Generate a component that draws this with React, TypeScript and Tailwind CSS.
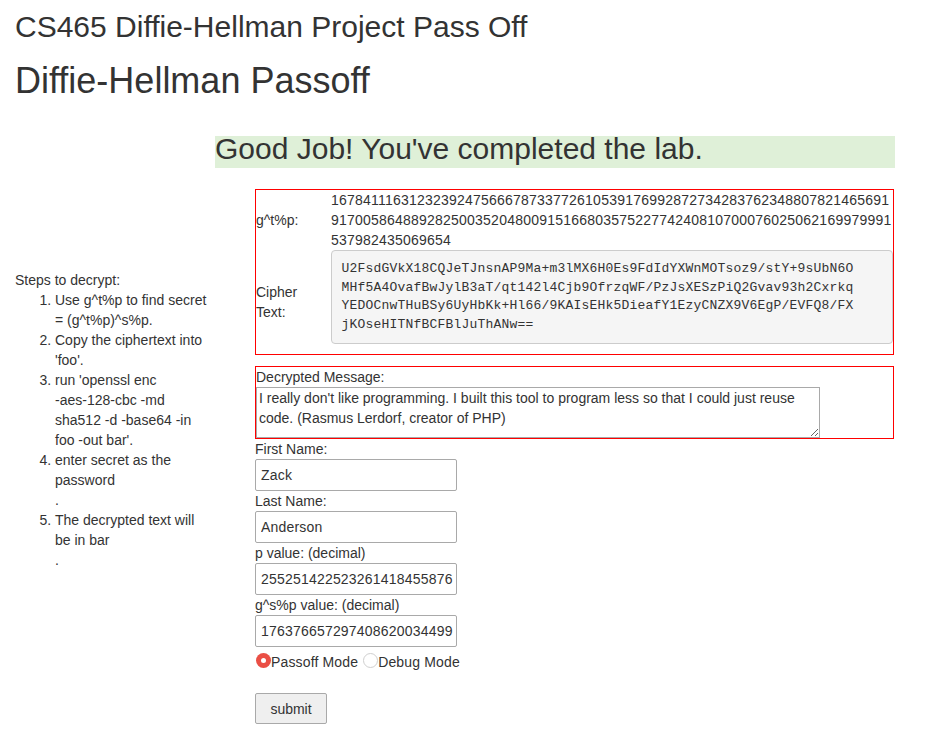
export default function App() {
  const cipher = `U2FsdGVkX18CQJeTJnsnAP9Ma+m3lMX6H0Es9FdIdYXWnMOTsoz9/stY+9sUbN6O
MHf5A4OvafBwJylB3aT/qt142l4Cjb9OfrzqWF/PzJsXESzPiQ2Gvav93h2Cxrkq
YEDOCnwTHuBSy6UyHbKk+Hl66/9KAIsEHk5DieafY1EzyCNZX9V6EgP/EVFQ8/FX
jKOseHITNfBCFBlJuThANw==`;

  const gtp =
    "1678411163123239247566678733772610539176992872734283762348807821465691" +
    "9170058648892825003520480091516680357522774240810700076025062169979991" +
    "537982435069654";

  const inputCls =
    "block h-[32px] w-[202px] rounded-[2px] border border-[#a9a9a9] pl-[5px] pr-[3px] tracking-[0.2px]";

  return (
    <div className="min-h-screen bg-white px-[15px] pt-[10px] font-['Liberation_Sans',Arial,sans-serif] text-[14px] leading-[20px] text-[#333]">
      <h2 className="text-[30px] leading-[33px]">CS465 Diffie-Hellman Project Pass Off</h2>
      <h1 className="mt-[18px] text-[36px] leading-[40px]">Diffie-Hellman Passoff</h1>

      <div className="ml-[200px] mt-[35px] w-[680px] bg-[#dff0d8] pb-[7px] text-[30px] leading-[25px]">
        Good Job! You've completed the lab.
      </div>

      <div className="mt-[21px] flex">
        {/* steps */}
        <div className="mt-[81px] w-[201px] whitespace-nowrap">
          <div>Steps to decrypt:</div>
          <ol className="list-decimal pl-[40px]">
            <li>
              Use g^t%p to find secret
              <br />= (g^t%p)^s%p.
            </li>
            <li>
              Copy the ciphertext into
              <br />
              'foo'.
            </li>
            <li>
              run 'openssl enc
              <br />
              -aes-128-cbc -md
              <br />
              sha512 -d -base64 -in
              <br />
              foo -out bar'.
            </li>
            <li>
              enter secret as the
              <br />
              password
              <br />.
            </li>
            <li>
              The decrypted text will
              <br />
              be in bar
              <br />.
            </li>
          </ol>
        </div>

        {/* form */}
        <div className="ml-[39px] w-[639px]">
          <div className="grid grid-cols-[75px_1fr] border border-[#ff0000]">
            <div className="self-center pr-[4px]">g^t%p:</div>
            <div className="break-all tracking-[0.22px]">{gtp}</div>
            <div className="self-center pr-[4px]">Cipher Text:</div>
            <div className="pb-[10px]">
              <pre className="whitespace-pre rounded-[4px] border border-[#ccc] bg-[#f5f5f5] px-[9.5px] py-[9px] font-['Liberation_Mono',monospace] text-[13px] leading-[18.57px] tracking-[0.2px] text-[#333]">
                {cipher}
              </pre>
            </div>
          </div>

          <div className="mt-[11px] border border-[#ff0000]">
            <div>Decrypted Message:</div>
            <textarea
              readOnly
              className="block h-[51px] w-[564px] border border-[#a9a9a9] px-[2px] pt-0 leading-[20px]"
              defaultValue="I really don't like programming. I built this tool to program less so that I could just reuse code. (Rasmus Lerdorf, creator of PHP)"
            />
          </div>

          <div>First Name:</div>
          <input readOnly defaultValue="Zack" className={inputCls} />
          <div>Last Name:</div>
          <input readOnly defaultValue="Anderson" className={inputCls} />
          <div>p value: (decimal)</div>
          <input readOnly defaultValue="255251422523261418455876" className={inputCls} />
          <div>g^s%p value: (decimal)</div>
          <input readOnly defaultValue="176376657297408620034499" className={inputCls} />

          <div className="mt-[5px] flex h-[20px] items-start tracking-[0.15px]">
            <span className="ml-[1px] mt-[1px] flex h-[15px] w-[15px] items-center justify-center rounded-full bg-[#ea4f45]">
              <span className="h-[5px] w-[5px] rounded-full bg-white" />
            </span>
            <span>Passoff Mode</span>
            <span className="ml-[5px] mt-[1px] h-[15px] w-[15px] rounded-full border border-[#cfcfcf] bg-white" />
            <span>Debug Mode</span>
          </div>

          <button className="mt-[21px] h-[31px] w-[72px] rounded-[2px] border border-[#a9a9a9] bg-[#efefef] text-[14px]">
            submit
          </button>
        </div>
      </div>
    </div>
  );
}
